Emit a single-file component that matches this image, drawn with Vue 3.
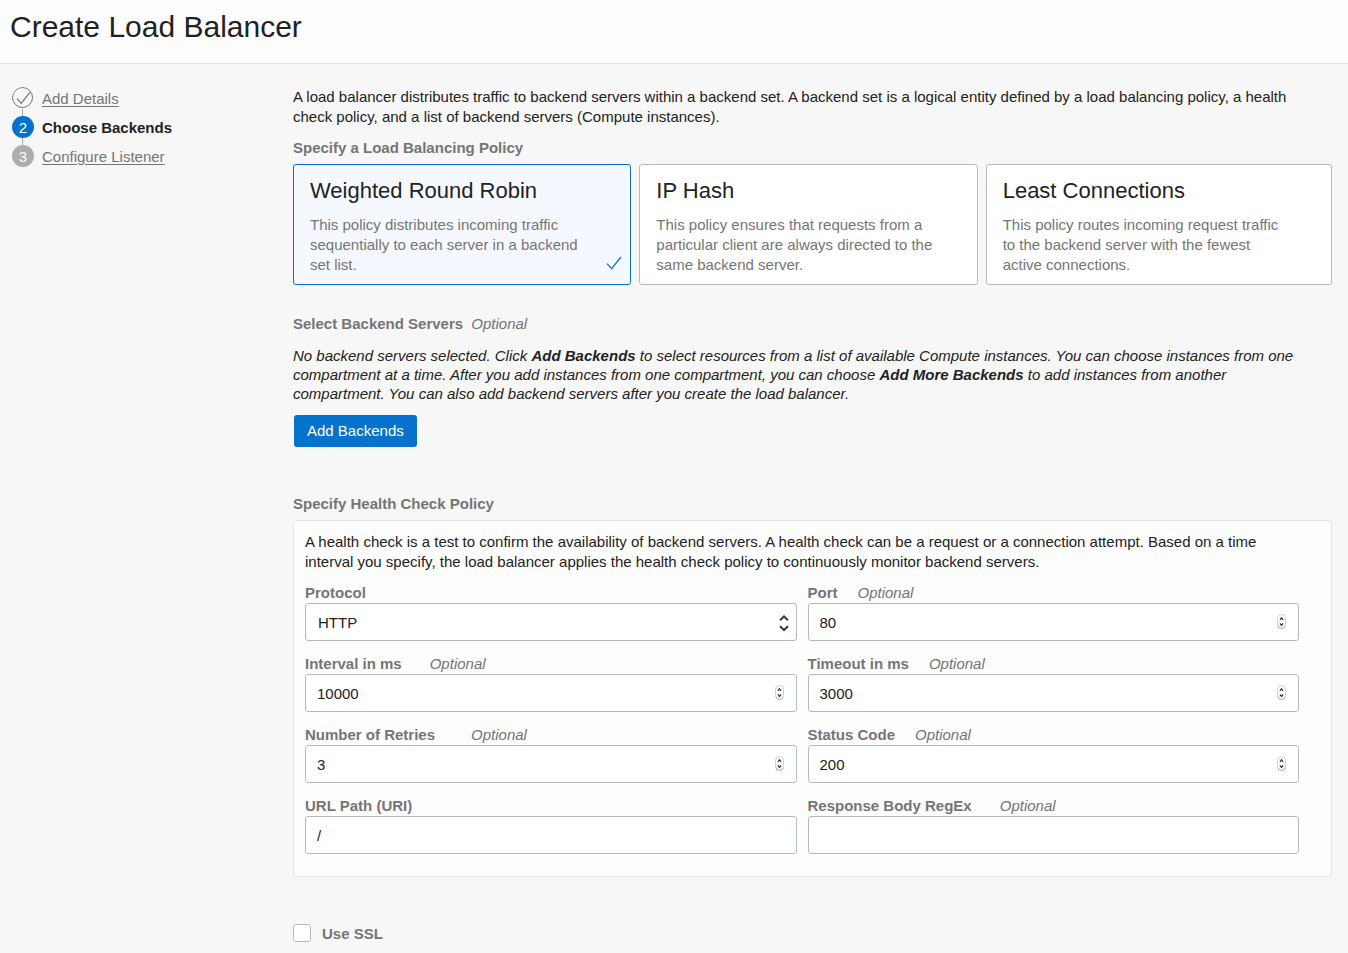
<script setup>
import { ref } from 'vue'

const policies = [
  {
    id: 'wrr',
    name: 'Weighted Round Robin',
    text: 'This policy distributes incoming traffic sequentially to each server in a backend set list.',
  },
  {
    id: 'ip-hash',
    name: 'IP Hash',
    text: 'This policy ensures that requests from a particular client are always directed to the same backend server.',
  },
  {
    id: 'least',
    name: 'Least Connections',
    text: 'This policy routes incoming request traffic to the backend server with the fewest active connections.',
  },
]
const policy = ref('wrr')

const fields = ref([
  { id: 'protocol', label: 'Protocol', type: 'select', value: 'HTTP' },
  { id: 'port', label: 'Port', type: 'number', value: 80, gap: 'gap-m' },
  { id: 'interval', label: 'Interval in ms', type: 'number', value: 10000, gap: 'gap-l' },
  { id: 'timeout', label: 'Timeout in ms', type: 'number', value: 3000, gap: 'gap-m' },
  { id: 'retries', label: 'Number of Retries', type: 'number', value: 3, gap: 'gap-xl' },
  { id: 'status', label: 'Status Code', type: 'number', value: 200, gap: 'gap-m' },
  { id: 'path', label: 'URL Path (URI)', type: 'text', value: '/' },
  { id: 'regex', label: 'Response Body RegEx', type: 'text', value: '', gap: 'gap-l' },
])
const useSsl = ref(false)
</script>

<template>
  <div class="page">
    <header class="header">
      <h1>Create Load Balancer</h1>
    </header>

    <div class="body">
      <nav class="steps" aria-label="Steps">
        <ol>
          <li>
            <svg class="marker" viewBox="0 0 22 22" aria-hidden="true">
              <circle cx="10.5" cy="10.5" r="10" fill="none" stroke="#6b6b6b" />
              <path d="M5 11.6 9.2 16.4 18 5.4" fill="none" stroke="#6b6b6b" stroke-width="1.1" />
            </svg>
            <a href="#details">Add Details</a>
          </li>
          <li aria-current="step">
            <span class="marker current">2</span>
            <strong>Choose Backends</strong>
          </li>
          <li>
            <span class="marker">3</span>
            <a href="#listener">Configure Listener</a>
          </li>
        </ol>
      </nav>

      <main class="content">
        <p class="intro">
          A load balancer distributes traffic to backend servers within a backend set. A backend set is a
          logical entity defined by a load balancing policy, a health check policy, and a list of backend
          servers (Compute instances).
        </p>

        <h2 id="policy-title" class="policy-title">Specify a Load Balancing Policy</h2>
        <div class="policies" role="radiogroup" aria-labelledby="policy-title">
          <label v-for="p in policies" :key="p.id" class="card" :class="{ selected: policy === p.id }">
            <input v-model="policy" class="card-radio" type="radio" name="policy" :value="p.id" />
            <span class="card-name">{{ p.name }}</span>
            <span class="card-text">{{ p.text }}</span>
            <svg v-if="policy === p.id" class="card-check" viewBox="0 0 16 14" aria-hidden="true">
              <path d="M1 7.6 5.6 12.6 15 1" fill="none" stroke="#0572ce" stroke-width="1.3" />
            </svg>
          </label>
        </div>

        <h2 class="servers-title">Select Backend Servers <em>Optional</em></h2>
        <p class="hint">
          No backend servers selected. Click <b>Add Backends</b> to select resources from a list of available
          Compute instances. You can choose instances from one compartment at a time. After you add instances
          from one compartment, you can choose <b>Add More Backends</b> to add instances from another
          compartment. You can also add backend servers after you create the load balancer.
        </p>
        <button class="add" type="button">Add Backends</button>

        <h2 class="health-title">Specify Health Check Policy</h2>
        <section class="panel">
          <p>
            A health check is a test to confirm the availability of backend servers. A health check can be a
            request or a connection attempt. Based on a time interval you specify, the load balancer applies
            the health check policy to continuously monitor backend servers.
          </p>
          <div class="fields">
            <div v-for="f in fields" :key="f.id" class="field">
              <label :for="f.id" :class="f.gap">{{ f.label }}<em v-if="f.gap">Optional</em></label>
              <div class="control">
                <select v-if="f.type === 'select'" :id="f.id" v-model="f.value">
                  <option>HTTP</option>
                  <option>TCP</option>
                </select>
                <input v-else :id="f.id" v-model="f.value" :type="f.type" />
                <svg v-if="f.type === 'select'" class="arrows" viewBox="0 0 10 18" aria-hidden="true">
                  <path
                    d="M1 6.2 5 2.4 9 6.2M1 12.2 5 16 9 12.2"
                    fill="none"
                    stroke="#3a3a3a"
                    stroke-width="2"
                  />
                </svg>
                <svg v-if="f.type === 'number'" class="spinner" viewBox="0 0 9 16" aria-hidden="true">
                  <rect x=".5" y=".5" width="8" height="14" rx="4" fill="#fff" stroke="#d0d0d0" />
                  <path d="M1 11.5Q1.6 14.6 4.5 14.6T8 11.5" fill="none" stroke="#b4b4b4" />
                  <path
                    d="M2.9 5.8 4.5 3.8 6.1 5.8M2.9 9.4 4.5 11.4 6.1 9.4"
                    fill="none"
                    stroke="#3a3a3a"
                    stroke-width="1.3"
                  />
                </svg>
              </div>
            </div>
          </div>
        </section>

        <label class="ssl">
          <input v-model="useSsl" type="checkbox" />
          <span>Use SSL</span>
        </label>
      </main>
    </div>
  </div>
</template>

<style>
body {
  background: #f7f7f7;
}
</style>

<style scoped>
.page {
  font-family: 'Liberation Sans', Arial, sans-serif;
  font-size: 15px;
  line-height: 20px;
  color: #222;
}
h1,
h2,
p,
ol {
  margin: 0;
  padding: 0;
}
.header {
  background: #fdfdfd;
  border-bottom: 1px solid #e2e2e2;
  padding: 9px 10px 18px;
}
h1 {
  font-size: 30px;
  line-height: 36px;
  font-weight: 400;
}
h2 {
  font-size: 15px;
  line-height: 20px;
  font-weight: 700;
  color: #757575;
}
em {
  font-weight: 400;
  color: #757575;
}
.body {
  display: grid;
  grid-template-columns: 270px 1fr;
  gap: 11px;
  padding: 23px 16px 8px 12px;
}
.steps ol {
  list-style: none;
  display: flex;
  flex-direction: column;
  gap: 7px;
}
.steps li {
  position: relative;
  display: flex;
  align-items: center;
  gap: 8px;
  height: 22px;
}
.steps li + li::before {
  content: '';
  position: absolute;
  left: 10px;
  top: -7px;
  width: 1px;
  height: 7px;
  background: #a8a8a8;
}
.steps a,
.steps strong {
  padding-top: 2px;
}
.steps a {
  color: #757575;
  text-underline-offset: 2px;
}
.marker {
  width: 22px;
  height: 22px;
  border-radius: 50%;
  background: #adadad;
  color: #fff;
  line-height: 23px;
  text-align: center;
}
svg.marker {
  background: none;
}
.marker.current {
  background: #0572ce;
}
.intro,
.hint {
  padding-right: 16px;
}
.policy-title {
  margin: 11px 0 6px;
}
.policies {
  display: grid;
  grid-template-columns: repeat(3, 1fr);
}
.card {
  position: relative;
  display: block;
  background: #fff;
  border: 1px solid #b4bac5;
  border-radius: 3px;
  padding: 12px 40px 9px 16px;
}
.card:not(:last-child) {
  margin-right: 8px;
}
.card.selected {
  background: #f5f9ff;
  border-color: #0572ce;
}
.card-radio {
  position: absolute;
  opacity: 0;
  margin: 0;
}
.card-name {
  display: block;
  font-size: 22px;
  line-height: 28px;
  margin-bottom: 10px;
}
.card-text {
  display: block;
  color: #757575;
}
.card-check {
  position: absolute;
  right: 8px;
  bottom: 14px;
  width: 16px;
  height: 14px;
}
.servers-title {
  margin: 29px 0 12px;
}
.servers-title em {
  margin-left: 4px;
}
.hint {
  font-style: italic;
  line-height: 19px;
}
.add {
  display: block;
  margin: 12px 0 47px 1px;
  padding: 6px 13px;
  border: 0;
  border-radius: 3px;
  background: #0572ce;
  color: #fff;
  font: inherit;
}
.health-title {
  margin-bottom: 6px;
}
.panel {
  background: #fdfdfd;
  border: 1px solid #e5e5e5;
  border-radius: 3px;
  padding: 11px 32px 22px 11px;
}
.fields {
  display: grid;
  grid-template-columns: 1fr 1fr;
  gap: 13px 11px;
  margin-top: 11px;
}
.field label {
  display: flex;
  font-weight: 700;
  color: #757575;
}
.gap-m {
  gap: 20px;
}
.gap-l {
  gap: 28px;
}
.gap-xl {
  gap: 36px;
}
.control {
  position: relative;
}
.control input,
.control select {
  display: block;
  box-sizing: border-box;
  width: 100%;
  height: 38px;
  margin: 0;
  padding: 0 32px 0 11px;
  border: 1px solid #b4bac5;
  border-radius: 3px;
  background: #fff;
  color: #222;
  font: inherit;
  appearance: none;
}
.control select {
  padding: 2px 32px 0 12px;
}
.control input[type='number'] {
  appearance: textfield;
}
.control input::-webkit-inner-spin-button {
  display: none;
}
.arrows,
.spinner {
  position: absolute;
  top: 11px;
  pointer-events: none;
}
.arrows {
  right: 8px;
  width: 10px;
  height: 18px;
}
.spinner {
  right: 13px;
  width: 9px;
  height: 16px;
}
.ssl {
  display: inline-flex;
  align-items: center;
  gap: 11px;
  margin-top: 45px;
  font-weight: 700;
  color: #757575;
}
.ssl input {
  appearance: none;
  width: 18px;
  height: 18px;
  margin: 0;
  border: 1px solid #b4bac5;
  border-radius: 3px;
  background: #fff;
}
.ssl input:checked {
  background: #0572ce;
}
.ssl span {
  padding-top: 2px;
}
</style>
